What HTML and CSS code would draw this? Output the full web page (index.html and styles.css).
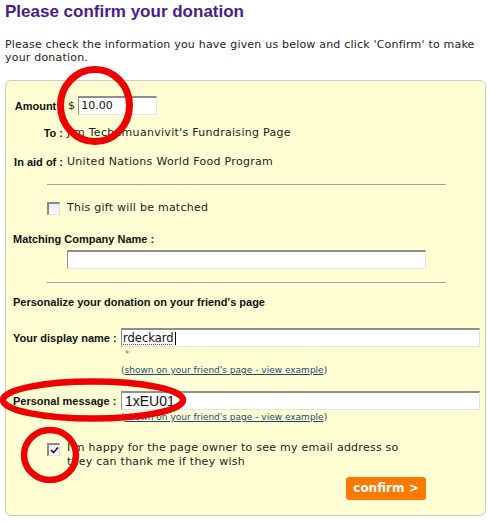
FILE: index.html
```html
<!DOCTYPE html>
<html lang="en">
<head>
<meta charset="utf-8">
<title>Please confirm your donation</title>
<link rel="stylesheet" href="styles.css">
</head>
<body>
<div class="page">
  <h1 class="title">Please confirm your donation</h1>
  <p class="intro">Please check the information you have given us below and click 'Confirm' to make your donation.</p>

  <div class="panel">
    <div class="row row-amount">
      <span class="lbl">Amount :</span>
      <span class="val"><span class="cur">$</span><span class="field f-amount">10.00</span></span>
    </div>
    <div class="row row-to">
      <span class="lbl">To :</span>
      <span class="val">Jim Techamuanvivit's Fundraising Page</span>
    </div>
    <div class="row row-aid">
      <span class="lbl">In aid of :</span>
      <span class="val">United Nations World Food Program</span>
    </div>

    <hr class="rule rule-1">

    <div class="check-row check-match">
      <span class="cb"></span>
      <span class="check-text">This gift will be matched</span>
    </div>

    <div class="heading h-company">Matching Company Name :</div>
    <div class="field f-company"></div>

    <hr class="rule rule-2">

    <div class="heading h-personal">Personalize your donation on your friend's page</div>

    <div class="prow prow-name">
      <span class="plbl">Your display name :</span>
      <span class="field f-name"><span class="spell">rdeckard</span><span class="caret"></span></span>
    </div>
    <div class="req">*</div>
    <div class="hint hint-1">(<a href="#">shown on your friend's page - view example</a>)</div>

    <div class="prow prow-msg">
      <span class="plbl">Personal message :</span>
      <span class="field f-msg">1xEU01</span>
    </div>
    <div class="hint hint-2">(<a href="#">shown on your friend's page - view example</a>)</div>

    <div class="check-row check-email">
      <span class="cb cb-checked"><svg width="9" height="8" viewBox="0 0 9 8"><path d="M1 4 L3.5 6.5 L8 1.5" fill="none" stroke="#111" stroke-width="1.6"/></svg></span>
      <span class="check-text email-text">I'm happy for the page owner to see my email address so they can thank me if they wish</span>
    </div>

    <div class="actions">
      <button class="confirm" type="button">confirm &gt;</button>
    </div>
  </div>

  <svg class="marks" width="489" height="523" viewBox="0 0 489 523">
    <ellipse cx="95" cy="105.5" rx="34.5" ry="36" fill="none" stroke="#ee0000" stroke-width="7"/>
    <ellipse cx="93" cy="400" rx="90" ry="18.5" fill="none" stroke="#ee0000" stroke-width="6.5"/>
    <ellipse cx="50" cy="455" rx="26" ry="25" fill="none" stroke="#ee0000" stroke-width="6.5"/>
  </svg>
</div>
</body>
</html>
```

FILE: styles.css
```css
html, body {
  margin: 0;
  background: #ffffff;
}

body {
  font-family: "DejaVu Sans", Verdana, sans-serif;
  font-size: 11px;
  color: #222222;
}

.page {
  position: relative;
  padding: 2px 3px 0 5px;
  width: 489px;
  height: 523px;
  box-sizing: border-box;
}

.title {
  margin: 0;
  font: bold 17px/20px "Liberation Sans", Arial, sans-serif;
  color: #4b1d89;
}

.intro {
  margin: 16px 0 0;
  line-height: 13px;
  letter-spacing: 0.2px;
}

.panel {
  margin-top: 16px;
  border: 1px solid #cacaca;
  border-radius: 6px;
  background: #ffffd3;
  padding: 15px 7px 15px;
}

.row {
  display: grid;
  grid-template-columns: 50px 1fr;
  column-gap: 4px;
  align-items: center;
  line-height: 14px;
}

.lbl,
.heading,
.plbl {
  font: bold 11px/14px "Liberation Sans", Arial, sans-serif;
  color: #111111;
}

.lbl {
  text-align: right;
  white-space: nowrap;
}

.row-amount {
  height: 19px;
}

.val {
  display: flex;
  align-items: center;
  letter-spacing: 0.3px;
}

.cur {
  margin: 0 3px 0 1px;
}

.row-to {
  margin-top: 11px;
}

.row-aid {
  margin-top: 15px;
}

.field {
  display: flex;
  align-items: center;
  box-sizing: border-box;
  height: 19px;
  background: #ffffff;
  border: 1px solid;
  border-color: #8e8e8e #e4e4e4 #e4e4e4 #8e8e8e;
  border-top-width: 2px;
  color: #111111;
  letter-spacing: 0;
}

.f-amount {
  width: 79px;
  padding-left: 2px;
}

.rule {
  margin: 0 0 0 34px;
  width: 399px;
  height: 0;
  border: 0;
  border-top: 1px solid #a2a29c;
}

.rule-1 {
  margin-top: 15px;
}

.check-row {
  display: flex;
  margin-left: 34px;
  line-height: 14px;
}

.check-text {
  letter-spacing: 0.25px;
}

.check-match {
  margin-top: 16px;
  align-items: center;
}

.cb {
  display: flex;
  align-items: center;
  justify-content: center;
  flex: none;
  width: 13px;
  height: 13px;
  box-sizing: border-box;
  border: 1px solid;
  border-color: #8a8a8a #dedede #dedede #8a8a8a;
  border-top-width: 2px;
  border-left-width: 2px;
  background: linear-gradient(#ececec, #ffffff);
  margin-right: 7px;
}

.h-company {
  margin-top: 17px;
}

.f-company {
  margin: 4px 0 0 54px;
  width: 359px;
}

.rule-2 {
  margin-top: 13px;
}

.h-personal {
  margin-top: 12px;
}

.prow {
  display: grid;
  grid-template-columns: 104px 359px;
  column-gap: 4px;
  align-items: center;
  height: 19px;
}

.plbl {
  white-space: nowrap;
}

.prow-name {
  margin-top: 19px;
}

.f-name {
  padding-left: 1px;
  font-size: 11.5px;
}

.spell {
  text-decoration: underline dotted #d22020;
  text-underline-offset: 2px;
}

.caret {
  display: inline-block;
  width: 1px;
  height: 13px;
  background: #000000;
  margin-left: 1px;
}

.req {
  margin: 2px 0 0 112px;
  font-size: 9px;
  line-height: 10px;
  color: #e0552a;
}

.hint {
  margin-left: 108px;
  font-size: 9px;
  line-height: 12px;
  color: #333333;
}

.hint a {
  color: #1c4a72;
  text-decoration: underline;
}

.hint-1 {
  margin-top: 5px;
}

.prow-msg {
  margin-top: 15px;
}

.f-msg {
  padding-left: 3px;
  font: 14px "Liberation Sans", Arial, sans-serif;
}

.hint-2 {
  margin-top: 1px;
}

.check-email {
  margin-top: 18px;
  align-items: flex-start;
}

.cb-checked {
  margin-top: 2px;
}

.email-text {
  max-width: 350px;
}

.actions {
  display: flex;
  justify-content: flex-end;
  width: 413px;
  margin-top: 8px;
}

.confirm {
  width: 80px;
  height: 23px;
  padding: 0;
  border: 0;
  border-radius: 3px;
  background: #ff7800;
  color: #ffffff;
  font: bold 12px/23px "DejaVu Sans", Verdana, sans-serif;
  cursor: pointer;
}

.marks {
  position: absolute;
  left: 0;
  top: 0;
  pointer-events: none;
}
```
